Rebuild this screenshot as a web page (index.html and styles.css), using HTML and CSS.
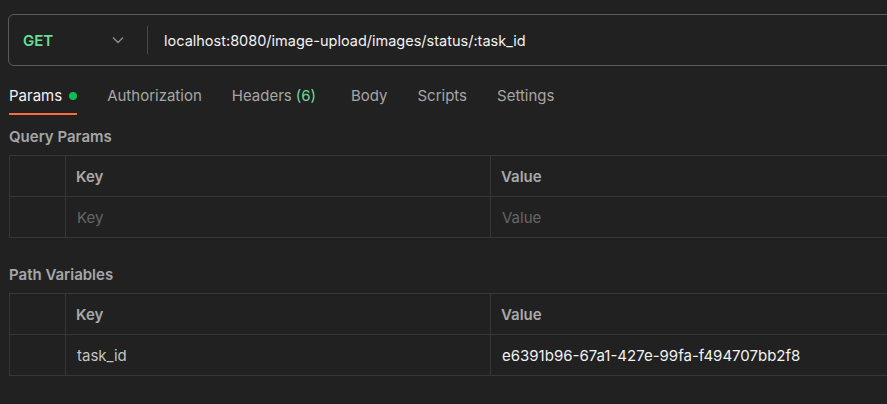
FILE: index.html
```html
<!DOCTYPE html>
<html lang="en">
<head>
<meta charset="utf-8">
<title>Request</title>
<link rel="stylesheet" href="styles.css">
</head>
<body>
<div class="page">
  <div class="urlbar">
    <div class="method">
      <span class="method-name">GET</span>
      <svg class="chev" width="12" height="8" viewBox="0 0 12 8"><path d="M1 1.5 L6 6.5 L11 1.5" fill="none" stroke="#8e8e8e" stroke-width="1.4"/></svg>
    </div>
    <div class="divider"></div>
    <div class="url">localhost:8080/image-upload/images/status/:task_id</div>
  </div>

  <nav class="tabs">
    <div class="tab active">Params <span class="dot"></span></div>
    <div class="tab">Authorization</div>
    <div class="tab">Headers <span class="count">(6)</span></div>
    <div class="tab tab-body">Body</div>
    <div class="tab">Scripts</div>
    <div class="tab">Settings</div>
  </nav>

  <h3 class="section-title">Query Params</h3>
  <table class="kv">
    <tr class="head"><td class="c1"></td><td class="c2">Key</td><td class="c3">Value</td></tr>
    <tr><td class="c1"></td><td class="c2 ph">Key</td><td class="c3 ph">Value</td></tr>
  </table>

  <h3 class="section-title second">Path Variables</h3>
  <table class="kv">
    <tr class="head"><td class="c1"></td><td class="c2">Key</td><td class="c3">Value</td></tr>
    <tr><td class="c1"></td><td class="c2 key">task_id</td><td class="c3 val">e6391b96-67a1-427e-99fa-f494707bb2f8</td></tr>
  </table>
</div>
</body>
</html>
```

FILE: styles.css
```css
html, body {
  margin: 0;
  padding: 0;
  background: #212121;
  overflow: hidden;
}
body {
  font-family: Inter, "Noto Sans", "Liberation Sans", sans-serif;
  font-size: 15px;
  color: #e6e6e6;
}
.page {
  width: 887px;
  height: 404px;
  overflow: hidden;
}
.urlbar {
  display: flex;
  align-items: center;
  margin: 14px -20px 0 8px;
  height: 50px;
  border: 1px solid #5a5a5a;
  border-radius: 6px;
}
.method {
  display: flex;
  align-items: center;
  justify-content: space-between;
  width: 124px;
  padding: 0 9px 0 14px;
  box-sizing: border-box;
}
.method-name {
  color: #6bdb96;
  font-weight: 600;
  font-size: 15px;
}
.chev { display: block; }
.divider {
  width: 1px;
  height: 28px;
  background: #4a4a4a;
  margin-left: 14px;
}
.url {
  margin-left: 16px;
  color: #f2f2f2;
  font-size: 14.5px;
}
.tabs {
  display: flex;
  gap: 30px;
  padding: 0 0 0 9px;
}
.tab {
  display: flex;
  align-items: center;
  color: #a6a6a6;
  font-size: 15px;
  line-height: 20px;
  padding: 20px 0 7px;
  border-bottom: 2px solid transparent;
}
.tab.active {
  color: #f2f2f2;
  border-bottom-color: #ff6c37;
}
.tab-body { margin-left: 5px; }
.dot {
  width: 8px;
  height: 8px;
  border-radius: 50%;
  background: #0cbb52;
  margin-left: 7px;
}
.count {
  color: #6bdb96;
  margin-left: 4px;
}
.section-title {
  margin: 12px 0 0 9px;
  height: 20px;
  line-height: 20px;
  font-size: 15px;
  font-weight: 600;
  color: #a6a6a6;
}
.section-title.second { margin-top: 27px; }
.kv {
  margin: 8px 0 0 9px;
  border-collapse: collapse;
  width: 900px;
  table-layout: fixed;
}
.kv tr { height: 41px; }
.kv td {
  border: 1px solid #373737;
  padding: 0 0 0 10px;
  font-size: 15px;
}
.kv .c1 { width: 45px; }
.kv .c2 { width: 414px; }
.kv .head td {
  font-weight: 600;
  color: #a9a9a9;
}
.kv .ph { color: #666666; padding-left: 11px; }
.kv .key { color: #c4c4c4; padding-left: 11px; }
.kv .val { color: #f2f2f2; padding-left: 11px; }
```
